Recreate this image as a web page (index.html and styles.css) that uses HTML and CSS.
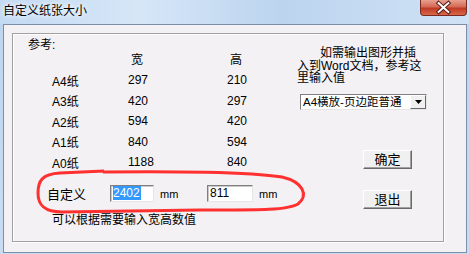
FILE: index.html
```html
<!DOCTYPE html>
<html lang="zh-CN">
<head>
    <meta charset="UTF-8">
    <title>自定义纸张大小</title>
    <link rel="stylesheet" href="styles.css">
</head>
<body>
    <div class="window">
        <div class="titlebar">
            <span class="title">自定义纸张大小</span>
            <div class="close">
                <svg width="46" height="15" viewBox="0 0 46 15">
                    <path d="M18 3 L28 12 M28 3 L18 12" stroke="#5a1a14" stroke-width="4" stroke-linecap="square"/>
                    <path d="M18 3 L28 12 M28 3 L18 12" stroke="#ffffff" stroke-width="2" stroke-linecap="square"/>
                </svg>
            </div>
        </div>
        <div class="client">
            <div class="group">
                <div class="left">
                    <div class="ref-label">参考:</div>
                    <div class="sizes">
                        <span></span><span class="head">宽</span><span class="head">高</span>
                        <span>A4纸</span><span>297</span><span>210</span>
                        <span>A3纸</span><span>420</span><span>297</span>
                        <span>A2纸</span><span>594</span><span>420</span>
                        <span>A1纸</span><span>840</span><span>594</span>
                        <span>A0纸</span><span>1188</span><span>840</span>
                    </div>
                    <div class="custom">
                        <span class="custom-label">自定义</span>
                        <div class="field"><span class="selected">2402</span></div>
                        <span class="unit">mm</span>
                        <div class="field field-wide">811</div>
                        <span class="unit">mm</span>
                    </div>
                    <div class="hint">可以根据需要输入宽高数值</div>
                </div>
                <div class="right">
                    <p class="note"><span class="indent"></span>如需输出图形并插<br>入到Word文档，参考这<br>里输入值</p>
                    <div class="select">
                        <span class="select-text">A4横放-页边距普通</span>
                        <span class="select-btn">
                            <svg width="7" height="4" viewBox="0 0 7 4"><path d="M0 0 H7 L3.5 4 Z" fill="#000"/></svg>
                        </span>
                    </div>
                    <button class="btn btn-ok">确定</button>
                    <button class="btn btn-exit">退出</button>
                </div>
                <svg class="mark" width="469" height="254" viewBox="0 0 469 254">
                    <path d="M103 172 C 170 171, 250 172, 282 177 C 303 182, 309 195, 298 204 C 286 211, 250 210, 200 210 L 62 212 C 44 212, 38 205, 38 193 C 38 181, 42 174, 60 173 L 104 171"
                          fill="none" stroke="#ff3030" stroke-width="3" stroke-linejoin="round"/>
                </svg>
            </div>
        </div>
    </div>
</body>
</html>
```

FILE: styles.css
```css
body {
    margin: 0;
    font-family: "Liberation Sans", "Noto Sans CJK SC", sans-serif;
    font-size: 12px;
    color: #000;
}
.window {
    width: 469px;
    height: 254px;
    box-sizing: border-box;
    padding: 0 2px 1px 3px;
    background: linear-gradient(180deg, #bcd5ef 0%, #c9dcf1 100%);
    display: flex;
    flex-direction: column;
}
.titlebar {
    height: 24px;
    display: flex;
    align-items: flex-start;
    justify-content: space-between;
    background: linear-gradient(90deg, #c3daf3 0%, #d6e6f7 30%, #bcd4ef 60%, #d0e2f5 100%);
    margin: 0 -2px 0 -3px;
    padding-left: 3px;
}
.title {
    line-height: 22px;
    font-size: 12px;
    text-shadow: 0 0 6px #ffffff, 0 0 4px #ffffff;
}
.close {
    width: 45px;
    height: 15px;
    margin-right: 2px;
    border: 1px solid #7a2a20;
    border-top: none;
    border-radius: 0 0 4px 4px;
    background: linear-gradient(180deg, #e8a090 0%, #d46a55 45%, #c03a25 55%, #d86848 100%);
    display: flex;
    justify-content: center;
}
.close svg {
    display: block;
}
.client {
    flex: 1;
    background: #f3f1f4;
    border: 1px solid #7d8fa6;
    padding: 8px 0 0 8px;
}
.group {
    position: relative;
    width: 430px;
    height: 207px;
    border: 1px solid #a0a0a0;
    box-shadow: inset 1px 1px 0 #ffffff, 1px 1px 0 #ffffff;
    display: flex;
}
.left {
    width: 284px;
    flex: none;
}
.ref-label {
    margin: 4px 0 0 15px;
    line-height: 14px;
}
.sizes {
    margin-top: -4px;
    padding-left: 39px;
    display: grid;
    grid-template-columns: 76px 99px auto;
    grid-template-rows: 20px 22.5px repeat(4, 20.5px);
    align-items: center;
}
.sizes .head {
    padding-left: 3px;
}
.sizes span:nth-child(n+4):nth-child(-n+6) {
    margin-top: 2px;
}
.custom {
    margin-top: 12.5px;
    padding-left: 34px;
    display: flex;
    align-items: center;
    height: 17px;
}
.custom > * {
    flex: none;
}
.custom-label {
    width: 63px;
    font-size: 13px;
}
.field {
    width: 44px;
    height: 17px;
    box-sizing: border-box;
    background: #fff;
    border: 1px solid;
    border-color: #7f7f7f #e6e6e6 #e6e6e6 #7f7f7f;
    box-shadow: inset 1px 1px 0 #c8c8c8;
    padding-left: 2px;
    line-height: 15px;
}
.field-wide {
    width: 46px;
}
.selected {
    background: #3399ff;
    color: #fff;
    padding-right: 1px;
}
.unit {
    width: 53px;
    padding-left: 6px;
    box-sizing: border-box;
    font-size: 11px;
}
.hint {
    margin-top: 11px;
    padding-left: 39px;
    line-height: 14px;
}
.right {
    padding-top: 13px;
    display: flex;
    flex-direction: column;
    align-items: flex-start;
}
.note {
    margin: 0;
    line-height: 12.5px;
}
.indent {
    display: inline-block;
    width: 23px;
}
.select {
    margin: 9.5px 0 0 3px;
    width: 127px;
    height: 16px;
    box-sizing: border-box;
    background: #fff;
    border: 1px solid;
    border-color: #7f7f7f #e6e6e6 #e6e6e6 #7f7f7f;
    display: flex;
    align-items: center;
    justify-content: space-between;
}
.select-text {
    padding-left: 2px;
    font-size: 11.5px;
    line-height: 14px;
    white-space: nowrap;
}
.select-btn {
    width: 16px;
    height: 14px;
    flex: none;
    box-sizing: border-box;
    background: #f0f0f0;
    border: 1px solid;
    border-color: #ffffff #696969 #696969 #ffffff;
    display: flex;
    align-items: center;
    justify-content: center;
}
.btn {
    margin-left: 66px;
    width: 49px;
    height: 19px;
    padding: 0;
    font-family: inherit;
    font-size: 13px;
    background: #f0f0f0;
    border: 1px solid;
    border-color: #ffffff #696969 #696969 #ffffff;
    box-shadow: inset -1px -1px 0 #a0a0a0;
    line-height: 17px;
}
.btn-ok {
    margin-top: 40px;
}
.btn-exit {
    margin-top: 21px;
}
.mark {
    position: absolute;
    left: -13px;
    top: -34px;
    pointer-events: none;
}
```
